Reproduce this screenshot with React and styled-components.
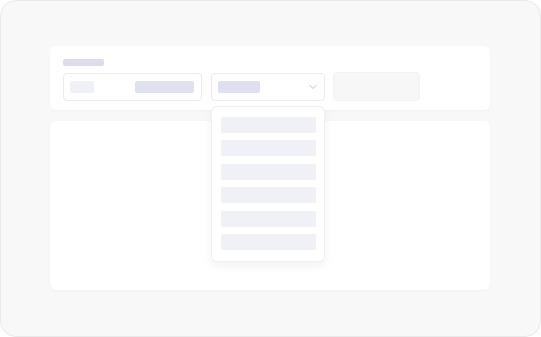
import React from "react";
import styled, { createGlobalStyle } from "styled-components";
import { ChevronDown } from "lucide-react";

const GlobalStyle = createGlobalStyle`
  html, body {
    margin: 0;
    padding: 0;
    background: #ffffff;
    font-family: "Inter", "Liberation Sans", sans-serif;
  }
`;

const Frame = styled.div`
  box-sizing: border-box;
  width: 541px;
  height: 337px;
  background: #f8f8f8;
  border: 1px solid #e9e9e9;
  border-radius: 16px;
  padding: 45px 50px 46px 49px;
  display: flex;
  flex-direction: column;
  gap: 11px;
`;

const Toolbar = styled.div`
  position: relative;
  height: 64px;
  box-sizing: border-box;
  background: #ffffff;
  border-radius: 6px;
  padding: 13px 13px 10px;
  display: flex;
  flex-direction: column;
  gap: 6px;
  box-shadow: 0 1px 3px rgba(0, 0, 0, 0.03);
`;

const Bar = styled.div`
  width: ${(p) => p.$w}px;
  height: ${(p) => p.$h || 12}px;
  background: ${(p) => p.$c || "#dfe0ef"};
  border-radius: 2px;
  flex-shrink: 0;
`;

const Row = styled.div`
  display: flex;
  gap: 9px;
  align-items: center;
`;

const Field = styled.div`
  box-sizing: border-box;
  width: ${(p) => p.$w}px;
  height: 28px;
  border: 1px solid #ebebeb;
  border-radius: 4px;
  background: #ffffff;
  display: flex;
  align-items: center;
  justify-content: space-between;
  padding: 0 ${(p) => p.$pr}px 0 6px;
`;

const Ghost = styled.div`
  box-sizing: border-box;
  width: 87px;
  height: 29px;
  margin-left: -1px;
  background: #f7f7f7;
  border: 1px solid #f2f2f2;
  border-radius: 4px;
`;

const Menu = styled.div`
  position: absolute;
  left: 161px;
  top: 60px;
  width: 114px;
  box-sizing: border-box;
  background: #ffffff;
  border: 1px solid #f0f0f0;
  border-radius: 6px;
  padding: 10px 8px 11px 9px;
  display: flex;
  flex-direction: column;
  gap: 7.4px;
  box-shadow: 0 4px 10px rgba(0, 0, 0, 0.06);
  z-index: 2;
`;

const Item = styled.div`
  height: 16px;
  background: #f0f1f7;
  border-radius: 2px;
`;

const Body = styled.div`
  flex: 1;
  background: #ffffff;
  border-radius: 6px;
  box-shadow: 0 1px 3px rgba(0, 0, 0, 0.03);
`;

export default function App() {
  return (
    <>
      <GlobalStyle />
      <Frame>
        <Toolbar>
          <Bar $w={41} $h={7} $c="#dcdcec" />
          <Row>
            <Field $w={139} $pr={7}>
              <Bar $w={24} $h={12} $c="#eff1f7" />
              <Bar $w={59} $h={12} $c="#e0e1ef" />
            </Field>
            <Field $w={114} $pr={5}>
              <Bar $w={42} $h={12} $c="#dedff0" />
              <ChevronDown size={12} strokeWidth={1.3} color="#9e9e9e" />
            </Field>
            <Ghost />
          </Row>
          <Menu>
            {[0, 1, 2, 3, 4, 5].map((i) => (
              <Item key={i} />
            ))}
          </Menu>
        </Toolbar>
        <Body />
      </Frame>
    </>
  );
}
